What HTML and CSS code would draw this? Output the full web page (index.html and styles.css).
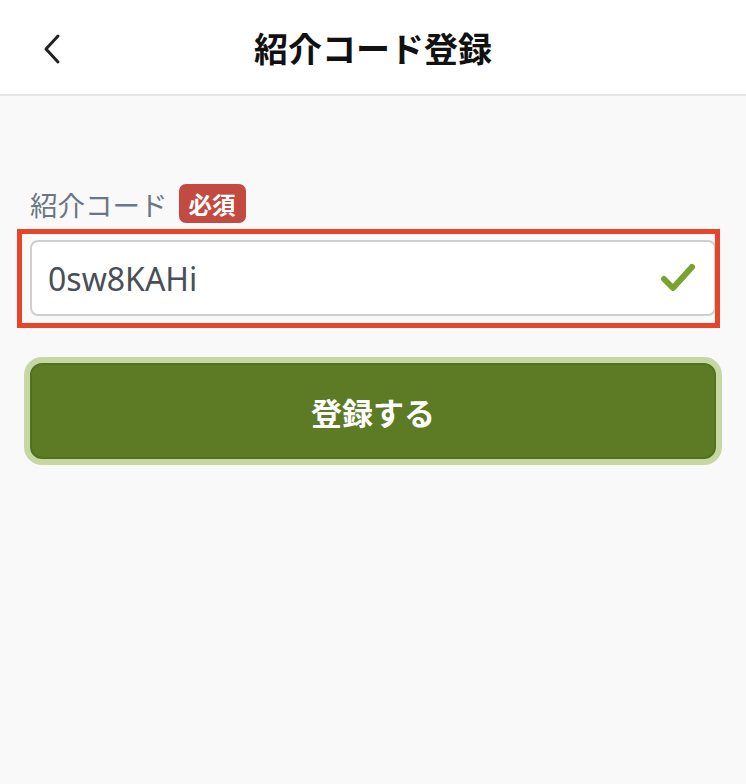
FILE: index.html
```html
<!DOCTYPE html>
<html lang="ja">
	<head>
		<meta charset="utf-8"/>
		<title>紹介コード登録</title>
		<link rel="stylesheet" href="styles.css">
	</head>
	<body>
		<header class="topbar">
			<a class="back" href="#">
				<svg width="20" height="32" viewBox="0 0 20 32">
					<polyline points="15,3 3,16 15,29" fill="none" stroke="#222" stroke-width="3" stroke-linecap="round" stroke-linejoin="round"/>
				</svg>
			</a>
			<h1 class="title">紹介コード登録</h1>
		</header>

		<main class="content">
			<div class="labelRow">
				<label class="label" for="code">紹介コード</label>
				<span class="badge">必須</span>
			</div>

			<div class="field">
				<input class="input" id="code" type="text" value="0sw8KAHi">
				<svg class="check" width="36" height="30" viewBox="0 0 36 30">
					<polyline points="4,16 13,25 32,4" fill="none" stroke="#7aa22f" stroke-width="6" stroke-linecap="round" stroke-linejoin="round"/>
				</svg>
			</div>

			<button class="submit">登録する</button>
		</main>
	</body>
</html>
```

FILE: styles.css
```css
* {
	box-sizing : border-box;
}

html, body {
	height : 100%;
}

body {
	margin      : 0;
	background  : #f9f9f9;
	font-family : 'Noto Sans CJK JP', 'Noto Sans', sans-serif;
}

.topbar {
	position        : relative;
	display         : flex;
	align-items     : center;
	justify-content : center;
	height          : 96px;
	background      : #fff;
	border-bottom   : 2px solid #e6e6e6;
}

.back {
	position : absolute;
	left     : 43px;
	top      : 33px;
	display  : block;
}

.title {
	margin      : 0;
	font-size   : 34px;
	font-weight : 700;
	color       : #111;
}

.content {
	padding : 88px 30px 0 30px;
}

.labelRow {
	display     : flex;
	align-items : center;
	height      : 39px;
}

.label {
	font-size : 27.5px;
	color     : #6a7686;
}

.badge {
	display       : flex;
	align-items   : center;
	height        : 39px;
	margin-left   : 11px;
	padding       : 0 10px;
	border-radius : 7px;
	background    : #c24a40;
	color         : #fff;
	font-size     : 23.5px;
	font-weight   : 700;
}

.field {
	position   : relative;
	margin-top : 17px;
}

/* annotation frame around the input */
.field::after {
	content  : "";
	position : absolute;
	top      : -11px;
	left     : -13px;
	right    : -4px;
	bottom   : -12px;
	border   : 5px solid #e8442a;
	pointer-events : none;
}

.input {
	display       : block;
	width         : 100%;
	height        : 76px;
	padding       : 0 70px 0 16px;
	border        : 2px solid #cfcfcf;
	border-radius : 8px;
	background    : #fff;
	color         : #4a4f57;
	font-family   : 'Noto Sans', sans-serif;
	font-size     : 32px;
	outline       : none;
}

.check {
	position : absolute;
	right    : 20px;
	top      : 23px;
}

.submit {
	display       : block;
	width         : 100%;
	height        : 96px;
	margin-top    : 47px;
	border        : 2px solid #52701f;
	border-radius : 12px;
	background    : #5c7b24;
	box-shadow    : 0 0 0 6px #c5d8a4;
	color         : #fff;
	font-family   : 'Noto Sans CJK JP', sans-serif;
	font-size     : 31px;
	font-weight   : 700;
}
```
